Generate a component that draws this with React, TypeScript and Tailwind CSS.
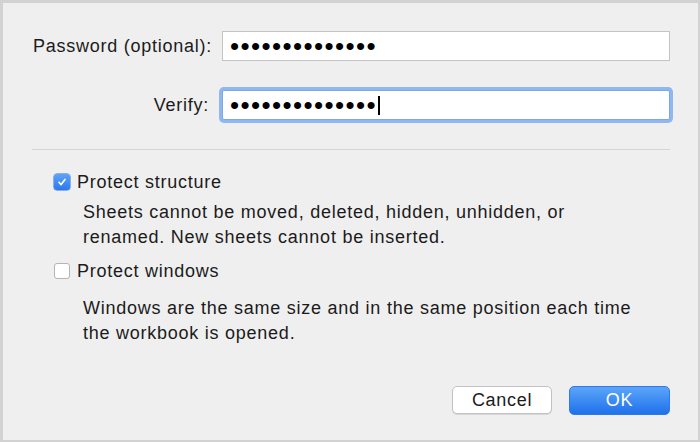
import React from "react"

const font = { fontFamily: '"Liberation Sans", Arial, sans-serif' }

function Dots({ n }: { n: number }) {
  return (
    <span className="text-[26px] leading-none tracking-[1.4px] text-black">
      {"•".repeat(n)}
    </span>
  )
}

function Checkbox({ checked }: { checked: boolean }) {
  if (checked) {
    return (
      <span className="flex h-[16px] w-[16px] shrink-0 items-center justify-center rounded-[3px] bg-gradient-to-b from-[#5ea3f8] to-[#2a78ee] shadow-[0_0_0_0.5px_#2a6fd6]">
        <svg width="10" height="10" viewBox="0 0 10 10">
          <path d="M2 5.3 L4.1 7.6 L8 2.4" fill="none" stroke="white" strokeWidth="1.6" strokeLinecap="round" strokeLinejoin="round" />
        </svg>
      </span>
    )
  }
  return <span className="h-[16px] w-[16px] shrink-0 rounded-[3px] border border-[#b5b5b5] bg-white" />
}

export default function App() {
  return (
    <div className="h-[442px] w-[700px] bg-[#d2d2d2] pt-[3px] pl-[3px] pr-[2px] pb-[2px]" style={font}>
      <div className="flex h-full flex-col bg-[#efefef] pl-[30px] pr-[28px] pt-[28px] text-[18px] tracking-[0.75px] text-[#1b1b1b]">
        {/* password fields */}
        <div className="grid grid-cols-[176px_1fr] items-center gap-x-[13px] gap-y-[29px]">
          <label className="whitespace-nowrap text-right">Password (optional):</label>
          <div className="flex h-[30px] items-center border border-[#c4c4c4] bg-white pl-[7px]">
            <Dots n={14} />
          </div>
          <label className="text-right">Verify:</label>
          <div className="flex h-[30px] items-center rounded-[2px] border border-[#7ea8e0] bg-white pl-[7px] shadow-[0_0_0_3px_#8fb8f2]">
            <Dots n={14} />
            <span className="ml-[1px] h-[19px] w-[2px] bg-black" />
          </div>
        </div>

        <div className="mt-[29px] -ml-[1px] h-px bg-[#d4d4d4]" />

        {/* options */}
        <div className="mt-[22px] flex items-center gap-[7px] pl-[21px] leading-[20px]">
          <Checkbox checked />
          <span>Protect structure</span>
        </div>
        <p className="mt-[8px] pl-[50px] leading-[25px]">
          Sheets cannot be moved, deleted, hidden, unhidden, or
          <br />
          renamed. New sheets cannot be inserted.
        </p>
        <div className="mt-[11px] flex items-center gap-[7px] pl-[21px] leading-[20px]">
          <Checkbox checked={false} />
          <span>Protect windows</span>
        </div>
        <p className="mt-[15px] pl-[50px] leading-[25px]">
          Windows are the same size and in the same position each time
          <br />
          the workbook is opened.
        </p>

        {/* buttons */}
        <div className="mt-[40px] flex justify-end gap-[17px]">
          <button className="h-[28px] w-[100px] rounded-[5px] border border-[#c2c2c2] bg-white text-[18px] tracking-[0.7px] text-[#1b1b1b] shadow-[0_1px_0_#d8d8d8]">
            Cancel
          </button>
          <button className="h-[29px] w-[101px] rounded-[5px] border border-[#2f7ae6] bg-gradient-to-b from-[#5aa5fa] to-[#1f70ea] text-[18px] tracking-[0.7px] text-white">
            OK
          </button>
        </div>
      </div>
    </div>
  )
}
